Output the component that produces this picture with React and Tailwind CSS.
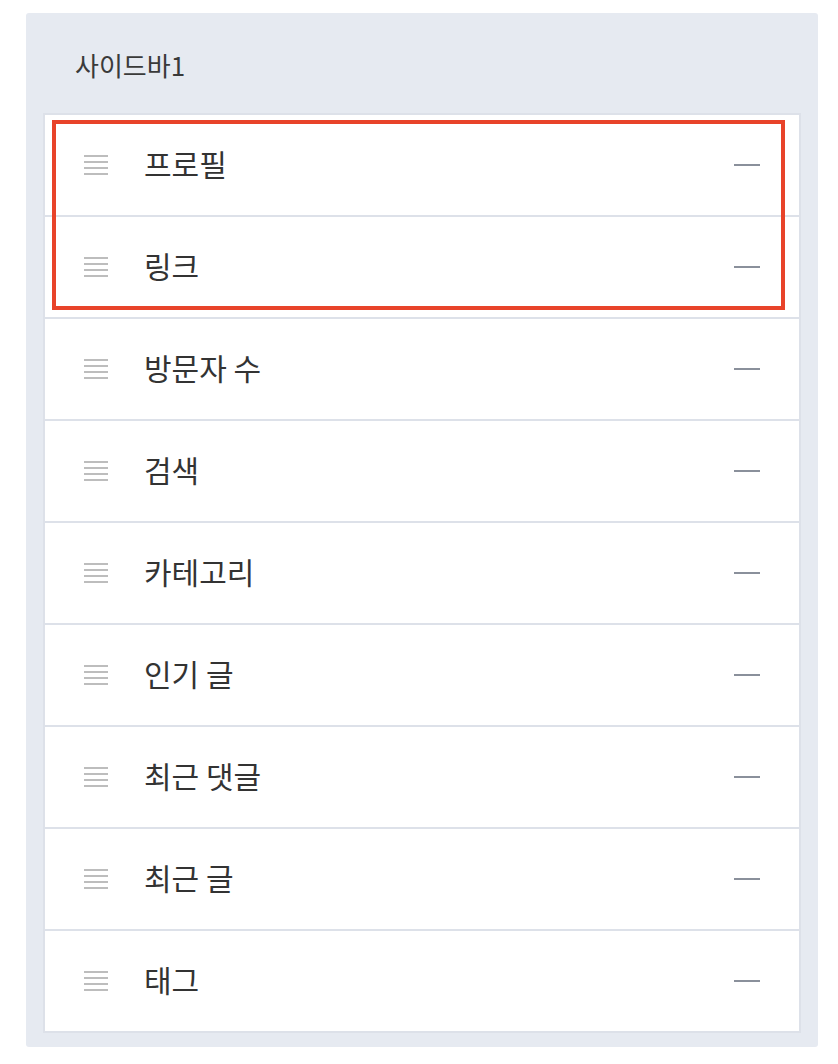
import React from "react";

const items = ["프로필", "링크", "방문자 수", "검색", "카테고리", "인기 글", "최근 댓글", "최근 글", "태그"];

function Handle() {
  return (
    <div className="flex w-[24px] shrink-0 flex-col gap-[4px]">
      <div className="h-[2px] bg-[#bdbdbd]" />
      <div className="h-[2px] bg-[#bdbdbd]" />
      <div className="h-[2px] bg-[#bdbdbd]" />
      <div className="h-[2px] bg-[#bdbdbd]" />
    </div>
  );
}

export default function App() {
  return (
    <div
      className="min-h-[1064px] bg-white pl-[26px] pr-[20px] pt-[13px]"
      style={{ fontFamily: '"Noto Sans CJK KR", "Noto Sans", sans-serif' }}
    >
      <div className="rounded-[3px] bg-[#e6eaf1] px-[17px] pb-[14px]">
        <div className="flex h-[100px] items-start pl-[32px] pt-[35px] text-[26px] leading-[34px] text-[#3a3a3a]">
          사이드바1
        </div>
        <div className="relative border-2 border-[#dde1e9] bg-white">
          {items.map((t, i) => (
            <div
              key={t}
              className={
                "flex items-center pl-[39px] pr-[39px] " +
                (i > 0 ? "h-[102px] border-t-2 border-[#dde1e9]" : "h-[100px]")
              }
            >
              <Handle />
              <div className="ml-[36px] flex-1 pb-[4px] text-[30px] leading-[38px] text-[#333333]">{t}</div>
              <div className="h-[2px] w-[26px] bg-[#8a909b]" />
            </div>
          ))}
          <div className="pointer-events-none absolute left-[7px] top-[5px] h-[190px] w-[733px] border-4 border-[#e8432a]" />
        </div>
      </div>
    </div>
  );
}
